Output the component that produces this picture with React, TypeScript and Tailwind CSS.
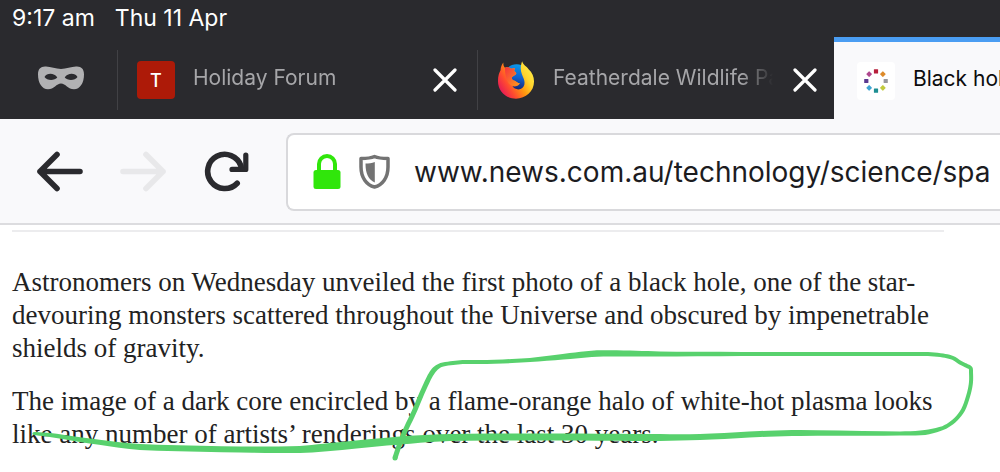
import React from "react";

type StrokePoint = [x: number, y: number, width: number];

const MARKER: StrokePoint[] = [
  [395, 233, 5], [399, 221, 5], [405, 206, 5], [414, 187, 5], [422, 168, 5],
  [430, 151, 5], [435, 144, 5], [441, 140, 4], [453, 138, 4], [465, 137, 4],
  [487, 137, 4], [530, 135, 4], [570, 131, 6], [597, 128.5, 6.5], [630, 128.5, 6],
  [660, 129, 5], [760, 129, 4], [810, 129, 4], [928, 129, 4], [943, 130.5, 4],
  [953, 133, 4], [960, 137.5, 4], [967, 141, 4], [970.5, 143, 4], [971, 147, 4],
  [971, 157, 4], [969, 168, 4], [963, 185, 4], [954, 196, 4], [943, 203, 4],
  [925, 207.5, 5], [900, 208.5, 4], [800, 208, 6], [760, 209, 6], [700, 212, 6],
  [650, 212.5, 7], [560, 212, 7], [450, 212.5, 7], [400, 215.5, 8], [330, 222, 8],
  [300, 224.5, 7], [240, 224.5, 6], [140, 222, 6], [90, 216, 5], [50, 210, 4],
  [34, 208.5, 3],
];

function spline(a: number, b: number, c: number, d: number, t: number) {
  const m1 = (c - a) / 2;
  const m2 = (d - b) / 2;
  const t2 = t * t;
  const t3 = t2 * t;
  return (2 * t3 - 3 * t2 + 1) * b + (t3 - 2 * t2 + t) * m1 + (3 * t2 - 2 * t3) * c + (t3 - t2) * m2;
}

// Builds a closed outline around a line whose width varies along its length.
function markerOutline(points: StrokePoint[]) {
  const left: string[] = [];
  const right: string[] = [];
  const steps = 5;
  const samples: StrokePoint[] = [];
  for (let i = 0; i < points.length - 1; i++) {
    const p1 = points[i];
    const p2 = points[i + 1];
    const len = Math.hypot(p2[0] - p1[0], p2[1] - p1[1]);
    const scale = (n: StrokePoint, from: StrokePoint, k: number) => {
      const l = Math.hypot(n[0] - from[0], n[1] - from[1]) || 1;
      return from[k] + ((n[k] - from[k]) * Math.min(l, len)) / l;
    };
    const p0 = points[i - 1] ?? p1;
    const p3 = points[i + 2] ?? p2;
    for (let s = 0; s < steps; s++) {
      const t = s / steps;
      samples.push([
        spline(scale(p0, p1, 0), p1[0], p2[0], scale(p3, p2, 0), t),
        spline(scale(p0, p1, 1), p1[1], p2[1], scale(p3, p2, 1), t),
        p1[2] + (p2[2] - p1[2]) * t,
      ]);
    }
  }
  samples.push(points[points.length - 1]);
  samples.forEach(([x, y, w], i) => {
    const a = samples[Math.max(0, i - 1)];
    const b = samples[Math.min(samples.length - 1, i + 1)];
    const l = Math.hypot(b[0] - a[0], b[1] - a[1]) || 1;
    const nx = (-(b[1] - a[1]) / l) * (w / 2);
    const ny = ((b[0] - a[0]) / l) * (w / 2);
    left.push(`${(x + nx).toFixed(2)} ${(y + ny).toFixed(2)}`);
    right.unshift(`${(x - nx).toFixed(2)} ${(y - ny).toFixed(2)}`);
  });
  return `M${left.join("L")}L${right.join("L")}Z`;
}

function MarkerAnnotation() {
  return (
    <svg className="pointer-events-none absolute top-0 left-0" width="1000" height="247" viewBox="0 0 1000 247" aria-hidden="true">
      <path d={markerOutline(MARKER)} fill="#58d16d" />
      <circle cx="395" cy="233" r="2.5" fill="#58d16d" />
      <circle cx="34" cy="208.5" r="1.5" fill="#58d16d" />
    </svg>
  );
}

function MaskIcon() {
  return (
    <svg width="46" height="24" viewBox="0 0 46 24" aria-hidden="true">
      <path
        fill="#b1b1b3"
        fillRule="evenodd"
        d="M7 .6C12 .2 17.500 3 23 3S34 .2 39 .6C43.500 .9 46 3 46 8.500C46 17 42 23.300 36 23.300C30 23.300 27.500 17.500 23 17.500S16 23.300 10 23.300C4 23.300 0 17 0 8.500C0 3 2.500 .9 7 .6ZM6.500 11C9 14.800 16.500 14.800 19.300 11.500C16.500 7 9 6.500 6.500 11ZM39.500 11C37 6.500 29.500 7 26.700 11.500C29.500 14.800 37 14.800 39.500 11Z"
      />
    </svg>
  );
}

function CloseIcon() {
  return (
    <svg width="24" height="24" viewBox="0 0 24 24" fill="none" stroke="#fff" strokeWidth="3.200" strokeLinecap="round" aria-hidden="true">
      <path d="M2 2L22 22M22 2L2 22" />
    </svg>
  );
}

function FirefoxIcon() {
  return (
    <svg className="shrink-0" width="38" height="38" viewBox="0 0 116 118" aria-hidden="true">
      <defs>
        <linearGradient id="globe" x1="0.600" y1="0" x2="0.400" y2="1">
          <stop offset="0" stopColor="#0a9bec" />
          <stop offset="0.500" stopColor="#1262cf" />
          <stop offset="1" stopColor="#17206b" />
        </linearGradient>
        <linearGradient id="fur" x1="1" y1="0.100" x2="0" y2="0.750">
          <stop offset="0" stopColor="#fff44f" />
          <stop offset="0.300" stopColor="#ffd52e" />
          <stop offset="0.520" stopColor="#ff980e" />
          <stop offset="0.760" stopColor="#ff4a30" />
          <stop offset="1" stopColor="#e3155b" />
        </linearGradient>
        <linearGradient id="face" x1="0" y1="0" x2="1" y2="1">
          <stop offset="0" stopColor="#f5333f" />
          <stop offset="1" stopColor="#ff9a1c" />
        </linearGradient>
      </defs>
      <circle cx="60" cy="50" r="40" fill="url(#globe)" />
      <path
        fill="url(#fur)"
        d="M77 1C80 13 92 17 97 26C108 36 114 49 114 64C114 95 88 117 58 117C26 117 2 93 2 62C2 47 6 36 10 29C10 20 14 10 19 5C18 12 20 17 24 21C31 18 38 20 43 24L55 22C52 28 51 33 57 34L59 39C56 45 49 46 46 50C43 57 49 60 54 61C60 63 63 70 70 69C66 79 52 81 47 78C52 87 63 90 72 87C85 82 87 67 82 55C77 42 67 28 77 1Z"
      />
      <path fill="url(#face)" d="M24 21C31 18 38 20 43 24L55 22C52 28 51 33 57 34L59 39C56 45 49 46 46 50C43 57 49 60 54 61C60 63 63 70 70 69C62 79 49 78 42 75C30 68 23 44 24 21Z" />
    </svg>
  );
}

const DOTS = ["#b71f3b", "#dd8a2a", "#98989d", "#c2ca3e", "#1d8e92", "#3fa4d2", "#5a3990", "#b0478f"];

function NewsIcon() {
  return (
    <span className="flex size-[38px] shrink-0 items-center justify-center rounded-sm bg-white">
      <svg width="26" height="26" viewBox="-13 -13 26 26" aria-hidden="true">
        {DOTS.map((fill, i) => (
          <rect key={fill} x="-2.100" y="-11.800" width="4.200" height="4.200" rx="0.500" fill={fill} transform={`rotate(${i * 45})`} />
        ))}
      </svg>
    </span>
  );
}

function ArrowIcon({ className }: { className: string }) {
  return (
    <svg className={className} width="46" height="42" viewBox="0 0 46 42" fill="none" stroke="currentColor" strokeWidth="5.600" strokeLinecap="round" strokeLinejoin="round" aria-hidden="true">
      <path d="M20 3.500L3 20.500L20 37.500M3 20.500H43" />
    </svg>
  );
}

function ReloadIcon() {
  return (
    <svg className="block" width="46" height="42" viewBox="0 0 46 42" fill="none" stroke="#2a2a2e" strokeWidth="5.600" strokeLinecap="round" strokeLinejoin="round" aria-hidden="true">
      <path d="M33.200 32.200A17.100 17.100 0 1 1 37 15" />
      <path d="M41.800 4V18.400H28" strokeWidth="5.200" />
      <path d="M35 12L38.500 18" strokeWidth="4" />
    </svg>
  );
}

function LockIcon() {
  return (
    <svg className="shrink-0" width="28" height="36" viewBox="0 0 28 36" aria-hidden="true">
      <path d="M6 17V10A8 8 0 0 1 22 10V17" fill="none" stroke="#30e60b" strokeWidth="4" />
      <rect x="0.500" y="16" width="27" height="19" rx="2.500" fill="#30e60b" />
    </svg>
  );
}

function ShieldIcon() {
  return (
    <svg className="block shrink-0" width="31" height="36" viewBox="0 0 31 36" aria-hidden="true">
      <path d="M15.500 2.500C19.500 4.300 24 4.500 29 4.500V13C29 23.500 23.500 31 15.500 33C7.500 31 2 23.500 2 13V4.500C7 4.500 11.500 4.300 15.500 2.500Z" fill="#fff" stroke="#737373" strokeWidth="3.500" strokeLinejoin="round" />
      <path d="M15.800 8V28.500C9.500 25.500 6.500 20 6.500 9.500C9.500 9.500 13 9 15.800 8Z" fill="#737373" />
    </svg>
  );
}

function InactiveTab({ icon, title }: { icon: React.ReactNode; title: string }) {
  return (
    <div className="flex w-[360px] shrink-0 items-center pt-1">
      <button type="button" role="tab" aria-selected="false" className="flex min-w-0 flex-1 items-center gap-[18px] pl-[19px] text-left text-[21px] text-[#a6a6a9]">
        {icon}
        <span className="min-w-0 flex-1 overflow-hidden pb-1 whitespace-nowrap [mask-image:linear-gradient(to_left,transparent,black_32px)]">{title}</span>
      </button>
      <button type="button" aria-label={`Close ${title}`} className="ml-5 pr-5">
        <CloseIcon />
      </button>
      <span className="h-[60px] w-px bg-[#414145]" />
    </div>
  );
}

export default function App() {
  return (
    <div className="min-h-screen overflow-hidden bg-white font-['Inter',sans-serif]">
      <header>
        <div className="bg-[#2a2a2e]">
          <div className="flex h-[37px] items-center gap-5 px-3 text-[23px] text-white">
            <time>9:17 am</time>
            <time>Thu 11 Apr</time>
          </div>
          <div role="tablist" className="flex h-[82px]">
            <div className="flex w-[118px] shrink-0 items-center pt-1">
              <button type="button" aria-label="Private browsing" className="flex flex-1 justify-center pb-1 pl-1">
                <MaskIcon />
              </button>
              <span className="h-[60px] w-px bg-[#414145]" />
            </div>
            <InactiveTab
              title="Holiday Forum"
              icon={<span className="flex size-[38px] shrink-0 items-center justify-center rounded bg-[#ad1a08] text-[18px] font-medium text-white">T</span>}
            />
            <InactiveTab title="Featherdale Wildlife Park" icon={<FirefoxIcon />} />
            <button type="button" role="tab" aria-selected="true" className="-ml-1 flex min-w-0 flex-1 items-center gap-[18px] overflow-hidden border-t-5 border-[#4a9df2] bg-[#f9f9fb] pl-[23px] text-left text-[21px] whitespace-nowrap text-[#0c0c0d]">
              <NewsIcon />
              <span className="pb-1">Black hole</span>
            </button>
          </div>
        </div>
        <nav aria-label="Browser" className="flex items-center border-b-2 border-[#dcdcdf] bg-[#f9f9fb] pt-[14px] pb-3 pl-[37px]">
          <button type="button" aria-label="Back" className="mr-[37px] text-[#2a2a2e]">
            <ArrowIcon className="block" />
          </button>
          <button type="button" aria-label="Forward" disabled className="mr-[38px] text-[#e8e8ea]">
            <ArrowIcon className="block -scale-x-100" />
          </button>
          <button type="button" aria-label="Reload" className="mr-[36px]">
            <ReloadIcon />
          </button>
          <div className="flex h-[78px] min-w-0 flex-1 items-center rounded-l-lg border-2 border-r-0 border-[#d9d9dc] bg-white pl-[25px]">
            <LockIcon />
            <span className="ml-[18px]">
              <ShieldIcon />
            </span>
            <input
              type="text"
              aria-label="Address"
              defaultValue="www.news.com.au/technology/science/spa"
              className="ml-6 min-w-0 flex-1 bg-transparent text-[28px] text-[#1c1c1f] outline-none"
            />
          </div>
        </nav>
      </header>
      <main className="relative px-3 pt-[5px] font-['Liberation_Serif',serif] text-[27px] leading-[33px] text-[#222]">
        <hr className="mr-11 mb-[34px] border-t-2 border-[#ececee]" />
        <p className="mb-5">
          Astronomers on Wednesday unveiled the first photo of a black hole, one of the star-
          <br />
          devouring monsters scattered throughout the Universe and obscured by impenetrable
          <br />
          shields of gravity.
        </p>
        <p>
          The image of a dark core encircled by a flame-orange halo of white-hot plasma looks
          <br />
          like any number of artists’ renderings over the last 30 years.
        </p>
        <MarkerAnnotation />
      </main>
    </div>
  );
}
